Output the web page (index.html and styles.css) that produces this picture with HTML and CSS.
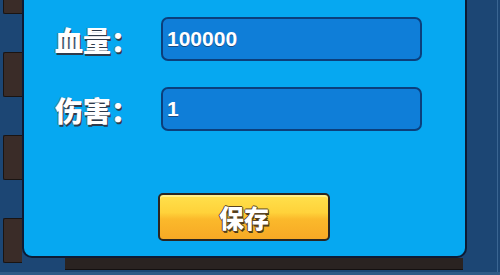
FILE: index.html
```html
<!DOCTYPE html>
<html lang="zh-CN">
<head>
<meta charset="utf-8">
<title>设置</title>
<link rel="stylesheet" href="styles.css">
</head>
<body>
<div class="stage">
  <div class="tabs">
    <div class="tab"></div>
    <div class="tab"></div>
    <div class="tab"></div>
    <div class="tab"></div>
  </div>
  <div class="main">
    <div class="panel">
      <div class="row">
        <label class="label" for="hp">血量：</label>
        <input class="field" id="hp" type="text" value="100000">
      </div>
      <div class="row">
        <label class="label" for="dmg">伤害：</label>
        <input class="field" id="dmg" type="text" value="1">
      </div>
      <button class="save" type="button">保存</button>
    </div>
    <div class="under"></div>
  </div>
  <div class="rail"></div>
</div>
</body>
</html>
```

FILE: styles.css
```css
html, body {
  margin: 0;
  padding: 0;
}
body {
  width: 500px;
  height: 275px;
  overflow: hidden;
  background: #1c4674;
  font-family: "Noto Sans CJK SC", "Liberation Sans", sans-serif;
}
.stage {
  display: flex;
  height: 275px;
  padding-left: 3px;
  box-sizing: border-box;
  border-bottom: 3px solid #2f5a86;
}
.tabs {
  width: 19px;
  display: flex;
  flex-direction: column;
  gap: 38px;
  margin-top: -31px;
}
.tab {
  height: 45px;
  background: #3a2c28;
  border: 1px solid #1a1412;
  border-right: none;
  border-radius: 2px 0 0 2px;
  box-sizing: border-box;
}
.main {
  width: 445px;
  display: flex;
  flex-direction: column;
}
.panel {
  height: 258px;
  box-sizing: border-box;
  background: #06a8f1;
  border-left: 2px solid #0c1a33;
  border-right: 2px solid #0c1a33;
  border-bottom: 2px solid #0c1a33;
  border-radius: 0 0 10px 10px;
  padding: 17px 0 0 31px;
  display: flex;
  flex-direction: column;
  gap: 26px;
}
.row {
  display: flex;
  align-items: center;
  height: 44px;
}
.label {
  width: 106px;
  font-size: 28px;
  font-weight: 900;
  color: #ffffff;
  line-height: 1;
  letter-spacing: 0;
  text-shadow: 1px 2px 0 #2f3b4c, -1px 0 0 #6a7d90;
  padding-top: 2px;
}
.field {
  width: 261px;
  height: 44px;
  box-sizing: border-box;
  background: #0f7ed8;
  border: 2px solid #0b3f7c;
  border-radius: 7px;
  padding: 0 0 0 4px;
  font-family: "Liberation Sans", sans-serif;
  font-weight: bold;
  font-size: 21px;
  color: #ffffff;
  outline: none;
  text-shadow: 0 1px 0 #1c4a80;
}
.save {
  margin-top: 36px;
  margin-left: 103px;
  width: 172px;
  height: 48px;
  box-sizing: border-box;
  border: 2px solid #2a2622;
  border-radius: 5px;
  background: linear-gradient(to bottom, #ffe14c 0%, #ffd23a 40%, #fbb92b 55%, #f7a925 100%);
  box-shadow: inset 0 2px 0 #fff08a;
  font-family: "Noto Sans CJK SC", sans-serif;
  font-weight: 900;
  font-size: 25px;
  color: #ffffff;
  padding: 0;
  text-shadow: 1px 0 0 #5a4420, -1px 0 0 #5a4420, 0 1px 0 #5a4420, 0 -1px 0 #5a4420, 1px 2px 0 #4a3818;
}
.under {
  margin-left: 43px;
  width: 398px;
  height: 11px;
  background: #2a2321;
  border-bottom: 1px solid #141010;
}
.rail {
  margin-left: 30px;
  width: 1px;
  background: #3a6592;
}
```
